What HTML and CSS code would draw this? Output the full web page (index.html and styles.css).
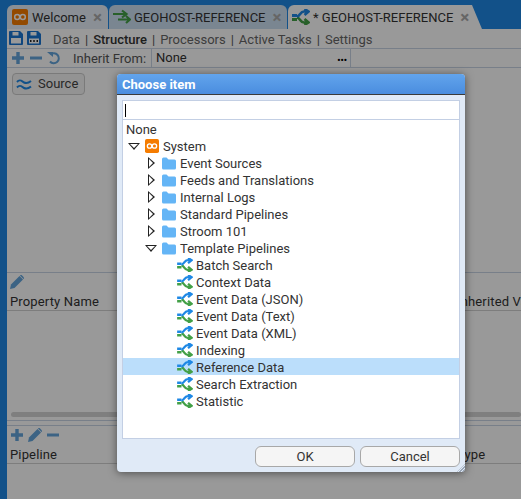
FILE: index.html
```html
<!DOCTYPE html>
<html>
<head>
	<meta charset="UTF-8">
	<title>Stroom</title>
	<link rel="stylesheet" href="styles.css">
</head>
<body>
	<svg class="defs" width="0" height="0">
		<symbol id="logo" viewBox="0 0 16 16">
			<rect width="16" height="16" rx="2" fill="#f57c00"/>
			<circle cx="5.2" cy="8" r="2.5" fill="none" stroke="#fff" stroke-width="1.5"/>
			<circle cx="10.8" cy="8" r="2.5" fill="none" stroke="#fff" stroke-width="1.5"/>
		</symbol>
		<symbol id="pipe" viewBox="0 0 18 16">
			<path d="M5 8.500c3.500.5 3 5 7 5h4M12.500 10l4 3.500-4 2.500" fill="none" stroke="#43a047" stroke-width="2.600"/>
			<path d="M0 10.500h5" stroke="#43a047" stroke-width="3"/>
			<path d="M5 7.500c3.500-.5 3-5 7-5h4M12.500 0l4 2.500-4 3.500" fill="none" stroke="#1e88e5" stroke-width="2.600"/>
			<path d="M0 6.500h5" stroke="#1e88e5" stroke-width="3"/>
		</symbol>
		<symbol id="feed" viewBox="0 0 18 16">
			<path d="M0 5h13M9 1.500L13.500 5 9 8.500M5 10.500h12M13 7l4 3.500-4 3.500" fill="none" stroke="#43a047" stroke-width="2.200"/>
		</symbol>
		<symbol id="folder" viewBox="0 0 14 13">
			<path d="M0 2a1.500 1.500 0 0 1 1.500-1.500h3l2 2h6A1.500 1.500 0 0 1 14 4v7a1.500 1.500 0 0 1-1.500 1.500h-11A1.500 1.500 0 0 1 0 11z" fill="#64b5f6"/>
		</symbol>
		<symbol id="save" viewBox="0 0 14 14">
			<path d="M0 1a1 1 0 0 1 1-1h10l3 3v10a1 1 0 0 1-1 1H1a1 1 0 0 1-1-1z" fill="#1976d2"/>
			<rect x="3.500" y="1" width="6" height="3.500" fill="#fff"/>
			<rect x="2" y="7" width="10" height="5.500" fill="#fff"/>
		</symbol>
		<symbol id="saveas" viewBox="0 0 14 14">
			<path d="M0 1a1 1 0 0 1 1-1h10l3 3v10a1 1 0 0 1-1 1H1a1 1 0 0 1-1-1z" fill="#1976d2"/>
			<rect x="3.500" y="1" width="6" height="3.500" fill="#fff"/>
			<rect x="2" y="7.500" width="10" height="5" fill="#fff"/>
			<path d="M3 10h1.500M6.250 10h1.500M9.500 10h1.500" stroke="#222" stroke-width="1.800"/>
		</symbol>
		<symbol id="plus" viewBox="0 0 14 14">
			<path d="M7 1v12M1 7h12" stroke="#64a5dc" stroke-width="3.400"/>
		</symbol>
		<symbol id="minus" viewBox="0 0 14 14">
			<path d="M1 7h12" stroke="#64a5dc" stroke-width="3"/>
		</symbol>
		<symbol id="undo" viewBox="0 0 14 14">
			<path d="M3.500 3.500A5 5 0 1 1 3 10.500" fill="none" stroke="#64a5dc" stroke-width="2"/>
			<path d="M0 1h6v5z" fill="#64a5dc"/>
		</symbol>
		<symbol id="pencil" viewBox="0 0 14 14">
			<path d="M0 14l1-4.500L9.500 1 13 4.500 4.500 13z" fill="#64a5dc"/>
			<path d="M10.500 0l3.500 3.500" stroke="#64a5dc" stroke-width="1.500"/>
		</symbol>
		<symbol id="waves" viewBox="0 0 16 12">
			<path d="M1 4c3-3.500 5-.5 7 .5s4 1 7-1.500M1 9.500c3-3.500 5-.5 7 .5s4 1 7-1.500" fill="none" stroke="#1e88e5" stroke-width="2"/>
		</symbol>
	</svg>

	<div class="tabs">
		<div class="tab tab-welcome">
			<svg class="tab-logo"><use href="#logo"/></svg>
			<span class="tab-name">Welcome</span>
			<span class="tab-close">×</span>
		</div>
		<div class="tab tab-feed">
			<svg class="tab-icon"><use href="#feed"/></svg>
			<span class="tab-name">GEOHOST-REFERENCE</span>
			<span class="tab-close">×</span>
		</div>
		<div class="tab tab-active">
			<svg class="tab-icon"><use href="#pipe"/></svg>
			<span class="tab-name">* GEOHOST-REFERENCE</span>
			<span class="tab-close">×</span>
		</div>
	</div>

	<div class="content">
		<div class="menu-bar">
			<svg class="save-icon"><use href="#save"/></svg>
			<svg class="save-icon"><use href="#saveas"/></svg>
			<div class="menu-links">
				<span>Data</span><i>|</i><b>Structure</b><i>|</i><span>Processors</span><i>|</i><span>Active Tasks</span><i>|</i><span>Settings</span>
			</div>
		</div>
		<div class="inherit-bar">
			<svg class="tool"><use href="#plus"/></svg>
			<svg class="tool"><use href="#minus"/></svg>
			<svg class="tool"><use href="#undo"/></svg>
			<span class="inherit-label">Inherit From:</span>
			<div class="inherit-field"><span>None</span><b>•••</b></div>
		</div>
		<div class="canvas-pane">
			<div class="source-btn">
				<svg class="source-icon"><use href="#waves"/></svg>
				<span>Source</span>
			</div>
		</div>
		<div class="props-pane">
			<div class="pane-tools"><svg class="tool"><use href="#pencil"/></svg></div>
			<div class="col-head"><span>Property Name</span><span>Inherited Value</span></div>
			<div class="scroll-thumb"></div>
		</div>
		<div class="refs-pane">
			<div class="pane-tools">
				<svg class="tool"><use href="#plus"/></svg>
				<svg class="tool"><use href="#pencil"/></svg>
				<svg class="tool"><use href="#minus"/></svg>
			</div>
			<div class="col-head"><span>Pipeline</span><span>Type</span></div>
		</div>
	</div>

	<div class="glass"></div>

	<div class="dialog">
		<div class="dialog-title">Choose item</div>
		<div class="dialog-body">
			<div class="search"><span class="caret"></span></div>
			<div class="tree">
				<div class="row">None</div>
				<div class="row lvl0"><span class="arrow open"></span><svg class="logo"><use href="#logo"/></svg>System</div>
				<div class="row lvl1"><span class="arrow"></span><svg class="folder"><use href="#folder"/></svg>Event Sources</div>
				<div class="row lvl1"><span class="arrow"></span><svg class="folder"><use href="#folder"/></svg>Feeds and Translations</div>
				<div class="row lvl1"><span class="arrow"></span><svg class="folder"><use href="#folder"/></svg>Internal Logs</div>
				<div class="row lvl1"><span class="arrow"></span><svg class="folder"><use href="#folder"/></svg>Standard Pipelines</div>
				<div class="row lvl1"><span class="arrow"></span><svg class="folder"><use href="#folder"/></svg>Stroom 101</div>
				<div class="row lvl1"><span class="arrow open"></span><svg class="folder"><use href="#folder"/></svg>Template Pipelines</div>
				<div class="row lvl2"><svg class="pipe"><use href="#pipe"/></svg>Batch Search</div>
				<div class="row lvl2"><svg class="pipe"><use href="#pipe"/></svg>Context Data</div>
				<div class="row lvl2"><svg class="pipe"><use href="#pipe"/></svg>Event Data (JSON)</div>
				<div class="row lvl2"><svg class="pipe"><use href="#pipe"/></svg>Event Data (Text)</div>
				<div class="row lvl2"><svg class="pipe"><use href="#pipe"/></svg>Event Data (XML)</div>
				<div class="row lvl2"><svg class="pipe"><use href="#pipe"/></svg>Indexing</div>
				<div class="row lvl2 selected"><svg class="pipe"><use href="#pipe"/></svg>Reference Data</div>
				<div class="row lvl2"><svg class="pipe"><use href="#pipe"/></svg>Search Extraction</div>
				<div class="row lvl2"><svg class="pipe"><use href="#pipe"/></svg>Statistic</div>
			</div>
			<div class="dialog-buttons">
				<div class="btn">OK</div>
				<div class="btn">Cancel</div>
			</div>
		</div>
		<div class="grip"></div>
	</div>
</body>
</html>
```

FILE: styles.css
```css
html, body { margin: 0; height: 499px; overflow: hidden; }
body {
	position: relative;
	width: 521px;
	background: #1e88e5;
	font-family: Roboto, sans-serif;
	font-size: 13px;
	color: #333;
	display: flex;
	flex-direction: column;
}
.defs { position: absolute; }

/* tabs */
.tabs { display: flex; height: 24px; margin: 5px 0 0 7px; gap: 1px; flex: none; }
.tab {
	display: flex;
	align-items: center;
	box-sizing: border-box;
	border-radius: 6px 6px 0 0;
	background: #cbdff2;
	white-space: nowrap;
}
.tab-welcome { width: 101px; padding-left: 5px; background: #e6eff8; }
.tab-feed { width: 178px; padding-left: 4px; }
.tab-active {
	width: 194px;
	padding-left: 4px;
	background: #fff;
	clip-path: polygon(0 0, 184px 0, 194px 100%, 0 100%);
}
.tab-logo { width: 16px; height: 16px; margin-right: 4px; }
.tab-icon { width: 18px; height: 16px; margin-right: 3px; }
.tab-name { flex: none; }
.tab-close { margin-left: 7px; font-size: 17px; font-weight: bold; line-height: 14px; color: #aaa; }

/* main panel */
.content {
	flex: 1;
	margin-left: 7px;
	background: #fff;
	display: flex;
	flex-direction: column;
	min-height: 0;
}
.menu-bar {
	display: flex;
	align-items: center;
	height: 19px;
	padding-left: 2px;
	gap: 4px;
	border-bottom: 1px solid #c8d4e4;
}
.save-icon { width: 14px; height: 14px; margin-top: -2px; }
.menu-links { display: flex; gap: 5px; margin: 1px 0 0 8px; color: #666; }
.menu-links b { font-weight: 500; color: #333; }
.menu-links i { font-style: normal; color: #555; }
.inherit-bar {
	display: flex;
	align-items: center;
	height: 18px;
	padding-left: 4px;
	gap: 4px;
	border-bottom: 1px solid #c8d4e4;
}
.tool { width: 14px; height: 14px; }
.inherit-label { margin-left: 8px; width: 74px; color: #555; }
.inherit-field {
	display: flex;
	justify-content: space-between;
	align-items: center;
	box-sizing: border-box;
	width: 200px;
	height: 18px;
	padding: 0 3px 2px 4px;
	border-left: 1px solid #c8d4e4;
	border-right: 1px solid #c8d4e4;
}
.inherit-field b { font-size: 9px; line-height: 9px; padding-top: 6px; color: #000; }
.canvas-pane { height: 205px; padding: 5px 0 0 5px; box-sizing: border-box; border-bottom: 1px solid #c8d4e4; }
.source-btn {
	display: inline-flex;
	align-items: center;
	height: 19px;
	padding: 0 6px 1px 3px;
	gap: 6px;
	border: 1px solid #ccc;
	border-radius: 4px;
	background: #f5f5f5;
	color: #444;
}
.source-icon { width: 16px; height: 12px; }
.pane-tools {
	display: flex;
	align-items: center;
	box-sizing: border-box;
	height: 18px;
	padding-left: 3px;
	gap: 4px;
}
.col-head {
	display: grid;
	grid-template-columns: 447px auto;
	height: 20px;
	padding: 3px 0 0 3px;
	box-sizing: border-box;
	letter-spacing: 0.15px;
	border-bottom: 1px solid #d0d0d0;
	white-space: nowrap;
	overflow: hidden;
}
.props-pane { height: 148px; box-sizing: border-box; border-bottom: 1px solid #c8d4e4; }
.scroll-thumb { height: 5px; margin: 101px 0 0 4px; background: #d4d4d4; border-radius: 3px; }
.refs-pane { flex: 1; margin-top: 4px; border-top: 1px solid #c8d4e4; }

/* modal */
.glass { position: absolute; inset: 0; background: rgba(0, 0, 0, 0.4); }
.dialog {
	position: absolute;
	left: 117px;
	top: 74px;
	width: 348px;
	height: 398px;
	border-radius: 4px;
	overflow: hidden;
	box-shadow: 0 1px 8px rgba(0, 0, 0, 0.5);
	display: flex;
	flex-direction: column;
	background: #e0eaf7;
}
.dialog-title {
	height: 20px;
	padding: 1px 0 0 5px;
	box-sizing: border-box;
	background: linear-gradient(#62a4ec, #4a8ddf);
	color: #fff;
	font-weight: 700;
	line-height: 20px;
}
.dialog-body {
	flex: 1;
	border-top: 1px solid #3a3a3a;
	padding: 5px 5px 0 5px;
	display: flex;
	flex-direction: column;
}
.search {
	height: 20px;
	box-sizing: border-box;
	width: 338px;
	background: #fff;
	border: 1px solid #c3cfe4;
	padding: 3px 0 0 2px;
}
.caret { display: block; width: 1px; height: 13px; background: #000; }
.tree {
	box-sizing: border-box;
	width: 338px;
	height: 319px;
	background: #fff;
	border: 1px solid #c3cfe4;
	border-top: 0;
}
.row {
	display: flex;
	align-items: center;
	box-sizing: border-box;
	height: 17px;
	padding: 1px 0 0 3px;
	color: #333;
	white-space: nowrap;
}
.lvl0 { padding-left: 5px; }
.lvl1 { padding-left: 25px; }
.lvl2 { padding-left: 54px; }
.selected { background: #bbdefb; }
.arrow {
	width: 0;
	height: 0;
	margin-right: 7px;
	border-style: solid;
	border-width: 6px 0 6px 7px;
	border-color: transparent transparent transparent #222;
	position: relative;
}
.arrow::after {
	content: "";
	position: absolute;
	left: -6px;
	top: -4px;
	border-style: solid;
	border-width: 4px 0 4px 4px;
	border-color: transparent transparent transparent #fff;
}
.arrow.open {
	margin-right: 5px;
	border-width: 7px 6px 0 6px;
	border-color: #222 transparent transparent transparent;
}
.arrow.open::after {
	left: -4px;
	top: -6px;
	border-width: 4px 4px 0 4px;
	border-color: #fff transparent transparent transparent;
}
.lvl1 .arrow.open { margin-left: -3px; }
.logo { width: 14px; height: 14px; margin-right: 4px; }
.folder { width: 14px; height: 13px; margin-right: 4px; }
.pipe { width: 16px; height: 14px; margin-right: 3px; }
.dialog-buttons { display: flex; justify-content: flex-end; gap: 5px; margin-top: 7px; }
.btn {
	box-sizing: border-box;
	width: 100px;
	height: 21px;
	line-height: 19px;
	text-align: center;
	background: #f5f5f5;
	border: 1px solid #a8a8a8;
	border-radius: 6px;
	color: #333;
}
.grip {
	position: absolute;
	right: 0;
	bottom: 0;
	width: 8px;
	height: 8px;
	background: repeating-linear-gradient(135deg, #e0eaf7 0 1px, #9aa7b8 1px 2px);
	clip-path: polygon(100% 0, 100% 100%, 0 100%);
}
```
